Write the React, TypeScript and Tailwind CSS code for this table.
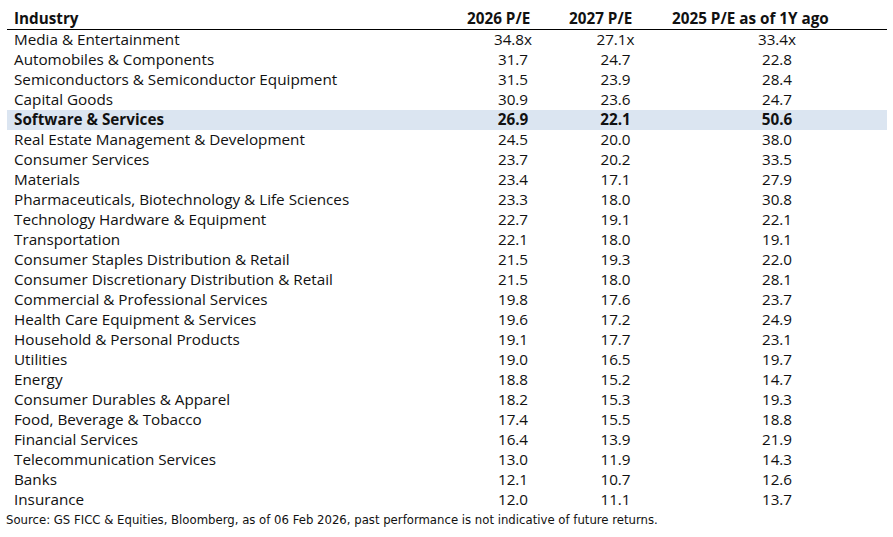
import React from "react";

type Row = [string, string, string, string];

const rows: Row[] = [
  ["Media & Entertainment", "34.8x", "27.1x", "33.4x"],
  ["Automobiles & Components", "31.7", "24.7", "22.8"],
  ["Semiconductors & Semiconductor Equipment", "31.5", "23.9", "28.4"],
  ["Capital Goods", "30.9", "23.6", "24.7"],
  ["Software & Services", "26.9", "22.1", "50.6"],
  ["Real Estate Management & Development", "24.5", "20.0", "38.0"],
  ["Consumer Services", "23.7", "20.2", "33.5"],
  ["Materials", "23.4", "17.1", "27.9"],
  ["Pharmaceuticals, Biotechnology & Life Sciences", "23.3", "18.0", "30.8"],
  ["Technology Hardware & Equipment", "22.7", "19.1", "22.1"],
  ["Transportation", "22.1", "18.0", "19.1"],
  ["Consumer Staples Distribution & Retail", "21.5", "19.3", "22.0"],
  ["Consumer Discretionary Distribution & Retail", "21.5", "18.0", "28.1"],
  ["Commercial & Professional Services", "19.8", "17.6", "23.7"],
  ["Health Care Equipment & Services", "19.6", "17.2", "24.9"],
  ["Household & Personal Products", "19.1", "17.7", "23.1"],
  ["Utilities", "19.0", "16.5", "19.7"],
  ["Energy", "18.8", "15.2", "14.7"],
  ["Consumer Durables & Apparel", "18.2", "15.3", "19.3"],
  ["Food, Beverage & Tobacco", "17.4", "15.5", "18.8"],
  ["Financial Services", "16.4", "13.9", "21.9"],
  ["Telecommunication Services", "13.0", "11.9", "14.3"],
  ["Banks", "12.1", "10.7", "12.6"],
  ["Insurance", "12.0", "11.1", "13.7"],
];

const grid = "grid grid-cols-[455px_102px_103px_220px]";

export default function App() {
  return (
    <div
      className="w-[893px] h-[537px] bg-white text-[#111] overflow-hidden"
      style={{ fontFamily: '"Open Sans", "Noto Sans", sans-serif' }}
    >
      <div className="pl-[7px] w-[887px]">
        <div className={`${grid} h-[30px] items-end border-b border-black text-[15.25px] font-bold leading-[20px] pb-[1px]`}>
          <div className="pl-[7px]">Industry</div>
          <div className="pl-[5px]">2026 P/E</div>
          <div className="pl-[5px]">2027 P/E</div>
          <div className="pl-[5px]">2025 P/E as of 1Y ago</div>
        </div>
        {rows.map((r, i) => {
          const hl = r[0] === "Software & Services";
          return (
            <div
              key={i}
              className={`${grid} h-[20px] items-start text-[15.25px] leading-[18px] ${
                hl ? "bg-[#dbe5f1] font-bold" : ""
              }`}
            >
              <div className="pl-[7px] whitespace-nowrap">{r[0]}</div>
              <div className="text-center">{r[1]}</div>
              <div className="text-center">{r[2]}</div>
              <div className="text-center">{r[3]}</div>
            </div>
          );
        })}
      </div>
      <div
        className="pl-[6px] text-[13px] leading-[20px] text-[#111] whitespace-nowrap"
        style={{ fontFamily: '"Liberation Sans Narrow", "DejaVu Sans Condensed", "Open Sans", sans-serif' }}
      >
        Source: GS FICC &amp; Equities, Bloomberg, as of 06 Feb 2026, past performance is not indicative of future returns.
      </div>
    </div>
  );
}
